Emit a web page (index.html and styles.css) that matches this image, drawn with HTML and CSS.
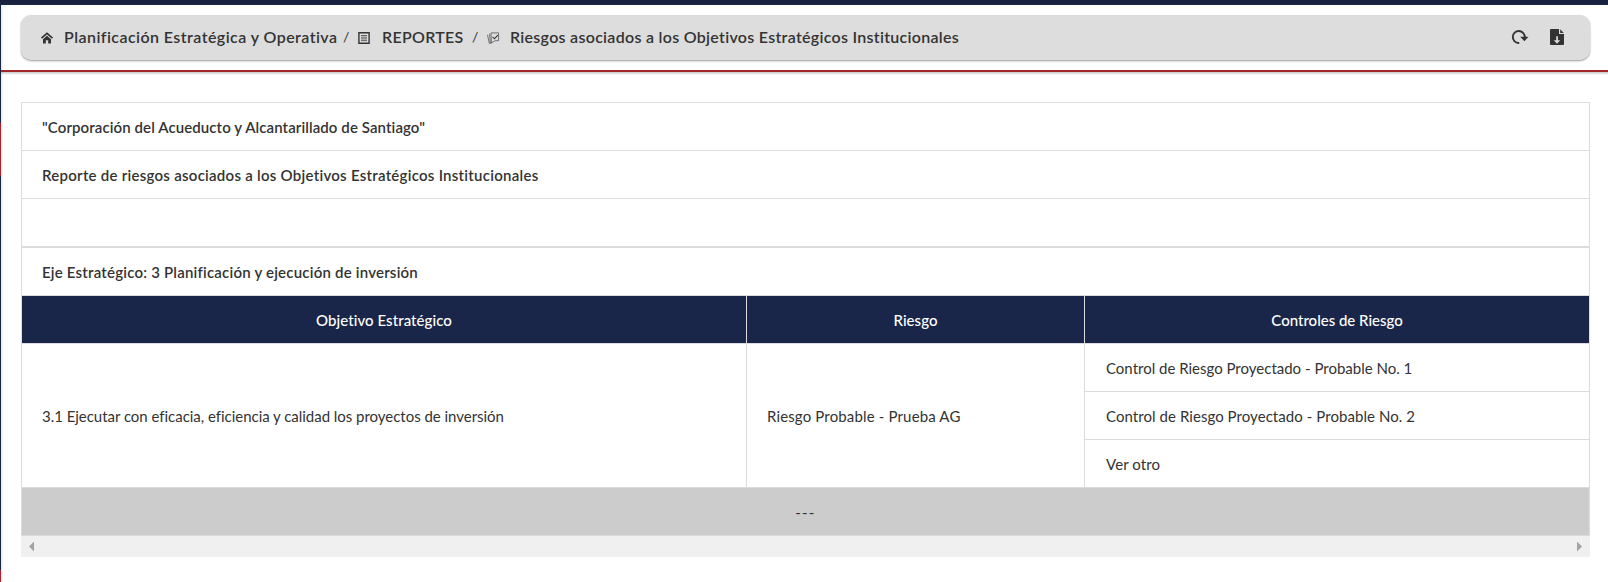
FILE: index.html
```
<!DOCTYPE html>
<html lang="es">
<head>
<meta charset="utf-8">
<title>Riesgos asociados a los Objetivos Estratégicos Institucionales</title>
<link rel="stylesheet" href="styles.css">
</head>
<body>
<div class="topbar"></div>
<div class="shell">
  <aside class="rail"><i class="rail-mark"></i><i class="rail-mark rail-mark-end"></i></aside>
  <div class="page">
    <header class="header">
      <nav class="crumbs">
        <svg class="icon home" viewBox="0 0 12 12"><path d="M.5 6.2 6 1.3l5.5 4.9" fill="none" stroke="#333" stroke-width="1.6"/><path d="M2 7.3 6 3.8l4 3.5V11.5H7.2V8.3H4.8v3.2H2z" fill="#333"/></svg>
        <span class="crumb crumb-module">Planificación Estratégica y Operativa</span>
        <span class="slash">/</span>
        <svg class="icon list" viewBox="0 0 12 12"><path d="M.9.8h10.2v10.4H.9z" fill="none" stroke="#333" stroke-width="1.4"/><path d="M3 3.5h6M3 5.2h6M3 6.9h6M3 8.6h6" stroke="#444" stroke-width=".8"/></svg>
        <span class="crumb crumb-reports">REPORTES</span>
        <span class="slash">/</span>
        <svg class="icon check" viewBox="0 0 12 12"><path d="M4 .9h7.6v7.8H8.2L4.4 10.9z" fill="none" stroke="#555" stroke-width=".8"/><path d="M2.5 1.6l.9 9.4M.5 2.8l1.8 8.6 2.2-.4" fill="none" stroke="#555" stroke-width=".8"/><path d="m5.6 4.9 1.9 1.9 3.3-3.6" fill="none" stroke="#333" stroke-width="1.1"/></svg>
        <span class="crumb crumb-current">Riesgos asociados a los Objetivos Estratégicos Institucionales</span>
      </nav>
      <div class="actions">
        <svg class="refresh" viewBox="0 0 18 16"><path d="M8.2 14H7.5A6 6 0 1 1 13.8 8" fill="none" stroke="#333" stroke-width="1.9"/><path d="M9.2 7.7h8.3l-4.1 4.6z" fill="#333"/></svg>
        <svg class="download" viewBox="0 0 14 16"><path d="M1 0h8v5h5v10q0 1-1 1H1q-1 0-1-1V1q0-1 1-1zM10.2.2 13.8 4h-3.6z" fill="#333"/><path d="M6.2 7.3h1.7v4h2.3L7 14.7l-3.2-3.4h2.4z" fill="#ddd"/></svg>
      </div>
    </header>
    <main class="report">
      <table class="grid">
        <tr><td class="title t-company">"Corporación del Acueducto y Alcantarillado de Santiago"</td></tr>
        <tr><td class="title t-report">Reporte de riesgos asociados a los Objetivos Estratégicos Institucionales</td></tr>
        <tr><td></td></tr>
      </table>
      <table class="grid">
        <colgroup><col class="c-goal"><col class="c-risk"><col></colgroup>
        <tr><td class="title t-axis" colspan="3">Eje Estratégico: 3 Planificación y ejecución de inversión</td></tr>
        <tr><th>Objetivo Estratégico</th><th>Riesgo</th><th class="h-controls">Controles de Riesgo</th></tr>
        <tr><td rowspan="3" class="goal">3.1 Ejecutar con eficacia, eficiencia y calidad los proyectos de inversión</td><td rowspan="3" class="risk">Riesgo Probable - Prueba AG</td><td class="control">Control de Riesgo Proyectado - Probable No. 1</td></tr>
        <tr><td class="control control-2">Control de Riesgo Proyectado - Probable No. 2</td></tr>
        <tr><td class="control other">Ver otro</td></tr>
        <tr><td colspan="3" class="divider">---</td></tr>
      </table>
      <div class="scrollbar"><i class="arrow arrow-left"></i><i class="arrow arrow-right"></i></div>
    </main>
  </div>
</div>
</body>
</html>
```
FILE: styles.css
```
* { box-sizing: border-box; }
body {
  margin: 0;
  height: 582px;
  overflow: hidden;
  background: #fff;
  color: #333;
  font: 15px/18px Lato, "Open Sans", sans-serif;
}
svg { display: block; flex: none; overflow: visible; }
.topbar { height: 5px; background: linear-gradient(#18203b, #1a2649); }
.shell { display: flex; height: 577px; }
.rail {
  display: flex;
  flex-direction: column;
  justify-content: space-between;
  width: 1px;
  padding-top: 118px;
  background: #1a2649;
}
.rail-mark { width: 1px; height: 53px; background: #a8232b; }
.rail-mark-end { height: 12px; }
.page { flex: 1; padding-top: 10px; background: linear-gradient(90deg, #e4e4e8, #fff 2px); }
.header {
  display: flex;
  justify-content: space-between;
  height: 45px;
  margin: 0 17px 0 20px;
  padding: 0 27px 0 19px;
  border-radius: 10px;
  background: #ddd;
  box-shadow: 0 1px 2px rgba(0, 0, 0, .4);
}
.header { margin-right: 18px; padding-right: 26px; }
.crumbs, .actions { display: flex; align-items: center; padding-bottom: 1px; }
.icon { width: 12px; height: 12px; }
.home { margin: 2px 11px 0 1px; }
.list { margin: 2px 12px 0 10px; }
.check { margin: 2px 11px 0 10px; }
.crumb { font-size: 16px; font-weight: 600; white-space: nowrap; }
.crumb-module { width: 274px; letter-spacing: .44px; }
.crumb-reports { width: 84px; letter-spacing: .28px; }
.crumb-current { letter-spacing: .29px; }
.slash { width: 5px; margin-left: 5px; font-size: 14px; text-align: center; }
.crumb-reports + .slash { margin-left: 6px; }
.refresh { width: 18px; height: 16px; margin-right: 21px; }
.download { width: 14px; height: 16px; }
.report {
  margin-top: 10px;
  padding: 30px 18px 0 20px;
  border-top: 2px solid #a1262c;
  background: linear-gradient(rgba(0, 0, 0, .22), transparent 3px);
}
.grid {
  width: 100%;
  table-layout: fixed;
  border-collapse: collapse;
}
.grid td, .grid th { height: 48px; padding: 0 20px; border: 1px solid #dcdcdc; text-align: left; }
.c-goal { width: 725px; }
.c-risk { width: 338px; }
.grid .title { font-weight: 600; }
.t-company { letter-spacing: .095px; }
.t-report { letter-spacing: .265px; }
.t-axis { letter-spacing: .21px; }
.grid th {
  background: #1a2649;
  color: #fff;
  font-weight: 500;
  text-align: center;
  letter-spacing: .07px;
}
.grid .h-controls { letter-spacing: -.01px; }
.goal { letter-spacing: -.03px; }
.risk { letter-spacing: .151px; }
.grid .control { padding-left: 21px; }
.control-2 { letter-spacing: .061px; }
.other { letter-spacing: .106px; }
.grid .divider { background: #ccc; text-align: center; letter-spacing: 1.2px; }
.scrollbar {
  display: flex;
  justify-content: space-between;
  align-items: center;
  height: 21px;
  padding: 0 8px;
  background: #f0f0f0;
}
.arrow { width: 5px; height: 10px; background: #a3a3a3; }
.arrow-left { clip-path: polygon(100% 0, 100% 100%, 0 50%); }
.arrow-right { clip-path: polygon(0 0, 100% 50%, 0 100%); }
```
